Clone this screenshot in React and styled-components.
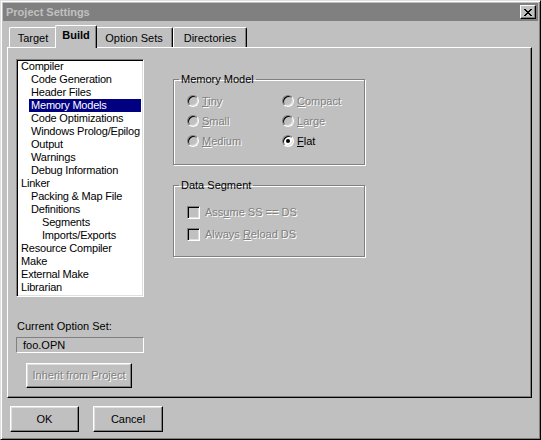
import React from "react";
import styled, { createGlobalStyle, css } from "styled-components";

const GlobalStyle = createGlobalStyle`
  html, body {
    margin: 0;
    padding: 0;
    background: #c0c0c0;
  }
  body {
    font-family: "Liberation Sans", Arial, sans-serif;
    font-size: 11px;
    line-height: 13px;
    color: #000;
  }
`;

const TREE = [
  ["Compiler", 0],
  ["Code Generation", 1],
  ["Header Files", 1],
  ["Memory Models", 1, true],
  ["Code Optimizations", 1],
  ["Windows Prolog/Epilog", 1],
  ["Output", 1],
  ["Warnings", 1],
  ["Debug Information", 1],
  ["Linker", 0],
  ["Packing & Map File", 1],
  ["Definitions", 1],
  ["Segments", 2],
  ["Imports/Exports", 2],
  ["Resource Compiler", 0],
  ["Make", 0],
  ["External Make", 0],
  ["Librarian", 0],
];

const INDENT = [0, 10, 21];

const etched = css`
  color: #808080;
  text-shadow: 1px 1px 0 #fff;
`;

const App = () => {
  return (
    <>
      <GlobalStyle />
      <Window>
        <TitleBar>
          <Title>Project Settings</Title>
          <CloseButton>
            <svg width="8" height="7" viewBox="0 0 8 7">
              <path
                d="M0 0h2v1h1v1h2v-1h1v-1h2v1h-1v1h-1v1h-1v1h1v1h1v1h1v1h-2v-1h-1v-1h-2v1h-1v1h-2v-1h1v-1h1v-1h1v-1h-1v-1h-1v-1h-1z"
                fill="#000"
              />
            </svg>
          </CloseButton>
        </TitleBar>

        <Body>
          <TabStrip>
            <Tab>Target</Tab>
            <Tab $active>Build</Tab>
            <Tab $w={78}>Option Sets</Tab>
            <Tab $w={74}>Directories</Tab>
          </TabStrip>

          <Panel>
            <LeftColumn>
              <TreeList>
                {TREE.map(([label, level, selected]) => (
                  <TreeItem key={label} $level={INDENT[level]} $selected={selected}>
                    {label}
                  </TreeItem>
                ))}
              </TreeList>

              <OptionSetLabel>Current Option Set:</OptionSetLabel>
              <ReadOnlyField>foo.OPN</ReadOnlyField>
              <PushButton $disabled $w={106} $h={25} $ml={10}>
                Inherit from Project
              </PushButton>
            </LeftColumn>

            <RightColumn>
              <Group $h={92}>
                <Legend>Memory Model</Legend>
                <RadioGrid>
                  <Radio label={<><u>T</u>iny</>} />
                  <Radio label={<><u>S</u>mall</>} />
                  <Radio label={<><u>M</u>edium</>} />
                  <Radio label={<><u>C</u>ompact</>} />
                  <Radio label={<><u>L</u>arge</>} />
                  <Radio label={<><u>F</u>lat</>} checked enabled />
                </RadioGrid>
              </Group>

              <Group $h={78} $mt={14}>
                <Legend>Data Segment</Legend>
                <CheckList>
                  <CheckRow>
                    <CheckBox />
                    <Etched>Ass<u>u</u>me SS == DS</Etched>
                  </CheckRow>
                  <CheckRow>
                    <CheckBox />
                    <Etched>Always <u>R</u>eload DS</Etched>
                  </CheckRow>
                </CheckList>
              </Group>
            </RightColumn>
          </Panel>

          <ButtonRow>
            <PushButton $w={69} $h={26}>OK</PushButton>
            <PushButton $w={70} $h={26}>Cancel</PushButton>
          </ButtonRow>
        </Body>
      </Window>
    </>
  );
};

const Radio = ({ label, checked, enabled }) => (
  <RadioRow>
    <RadioCircle $checked={checked} $enabled={enabled} />
    {enabled ? <span>{label}</span> : <Etched>{label}</Etched>}
  </RadioRow>
);

const Window = styled.div`
  box-sizing: border-box;
  width: 541px;
  height: 440px;
  padding: 1px;
  border: 1px solid;
  border-color: #dfdfdf #000 #000 #dfdfdf;
  box-shadow: inset 1px 1px 0 #fff, inset -1px -1px 0 #808080;
  display: flex;
  flex-direction: column;
  background: #c0c0c0;
`;

const TitleBar = styled.div`
  height: 18px;
  margin: 1px 1px 0 1px;
  padding: 0 2px 0 3px;
  background: #808080;
  display: flex;
  align-items: center;
  justify-content: space-between;
`;

const Title = styled.span`
  font-weight: bold;
  font-size: 11px;
  color: #c0c0c0;
`;

const CloseButton = styled.div`
  box-sizing: border-box;
  width: 16px;
  height: 14px;
  background: #c0c0c0;
  border: 1px solid;
  border-color: #fff #000 #000 #fff;
  box-shadow: inset -1px -1px 0 #808080;
  display: flex;
  align-items: center;
  justify-content: center;
  padding-right: 1px;
`;

const Body = styled.div`
  flex: 1;
  display: flex;
  flex-direction: column;
  padding: 4px 7px 0 5px;
`;

const TabStrip = styled.div`
  display: flex;
  align-items: flex-end;
  height: 22px;
  padding-left: 2px;
  position: relative;
  z-index: 1;
`;

const Tab = styled.div`
  box-sizing: border-box;
  width: ${({ $w }) => ($w ? `${$w}px` : "48px")};
  height: 20px;
  background: #c0c0c0;
  border-top: 1px solid #fff;
  border-left: 1px solid #fff;
  border-right: 1px solid #000;
  border-radius: 2px 2px 0 0;
  box-shadow: inset -1px 0 0 #808080;
  display: flex;
  align-items: center;
  justify-content: center;
  padding-top: 2px;

  ${({ $active }) =>
    $active &&
    css`
      width: 42px;
      height: 23px;
      margin: 0 -2px -1px;
      font-weight: bold;
      padding-top: 0;
      padding-bottom: 3px;
      position: relative;
      z-index: 2;
    `}
`;

const Panel = styled.div`
  box-sizing: border-box;
  height: 351px;
  border: 1px solid;
  border-color: #fff #000 #000 #fff;
  box-shadow: inset -1px -1px 0 #808080;
  padding: 11px 8px 9px 8px;
  display: grid;
  grid-template-columns: 128px 192px;
  column-gap: 29px;
`;

const LeftColumn = styled.div`
  display: flex;
  flex-direction: column;
  align-items: flex-start;
`;

const TreeList = styled.div`
  box-sizing: border-box;
  width: 128px;
  height: 238px;
  background: #fff;
  border: 1px solid;
  border-color: #808080 #fff #fff #808080;
  box-shadow: inset 1px 1px 0 #000, inset -1px -1px 0 #dfdfdf;
  padding: 0 2px 0 2px;
  overflow: hidden;
`;

const TreeItem = styled.div`
  height: 13px;
  line-height: 13px;
  margin-left: ${({ $level }) => $level}px;
  padding-left: 2px;
  white-space: nowrap;
  letter-spacing: -0.2px;
  ${({ $selected }) =>
    $selected &&
    css`
      background: #000080;
      color: #fff;
    `}
`;

const OptionSetLabel = styled.div`
  margin: auto 0 4px 1px;
`;

const ReadOnlyField = styled.div`
  box-sizing: border-box;
  width: 128px;
  height: 16px;
  border: 1px solid;
  border-color: #808080 #fff #fff #808080;
  padding: 1px 0 0 6px;
  margin-bottom: 10px;
`;

const PushButton = styled.div`
  box-sizing: border-box;
  width: ${({ $w }) => $w}px;
  height: ${({ $h }) => $h}px;
  margin-left: ${({ $ml }) => $ml || 0}px;
  background: #c0c0c0;
  border: 1px solid;
  border-color: #fff #000 #000 #fff;
  box-shadow: inset -1px -1px 0 #808080, inset 1px 1px 0 #dfdfdf;
  display: flex;
  align-items: center;
  justify-content: center;
  ${({ $disabled }) => $disabled && etched}
`;

const RightColumn = styled.div`
  display: flex;
  flex-direction: column;
  padding-top: 14px;
`;

const Group = styled.fieldset`
  box-sizing: border-box;
  height: ${({ $h }) => $h}px;
  margin: ${({ $mt }) => $mt || 0}px 0 0 0;
  padding: 0 0 0 13px;
  border: 1px solid #808080;
  box-shadow: inset 1px 1px 0 #fff, 1px 1px 0 #fff;
  min-width: 0;
`;

const Legend = styled.legend`
  padding: 0 2px;
  margin-left: -8px;
  line-height: 13px;
`;

const RadioGrid = styled.div`
  display: grid;
  grid-template-columns: 95px auto;
  grid-template-rows: repeat(3, 20px);
  grid-auto-flow: column;
  margin-top: 5px;
`;

const RadioRow = styled.div`
  display: flex;
  align-items: center;
  gap: 3px;
`;

const RadioCircle = styled.span`
  box-sizing: border-box;
  width: 12px;
  height: 12px;
  border-radius: 50%;
  border: 1px solid;
  border-color: #808080 #fff #fff #808080;
  box-shadow: inset 1px 1px 0 #000, inset -1px -1px 0 #dfdfdf;
  background: ${({ $enabled }) => ($enabled ? "#fff" : "#c0c0c0")};
  display: flex;
  align-items: center;
  justify-content: center;

  &::after {
    content: "";
    width: 4px;
    height: 4px;
    border-radius: 50%;
    background: #000;
    display: ${({ $checked }) => ($checked ? "block" : "none")};
  }
`;

const Etched = styled.span`
  ${etched}
`;

const CheckList = styled.div`
  display: flex;
  flex-direction: column;
  gap: 2px;
  margin-top: 10px;
`;

const CheckRow = styled.div`
  height: 20px;
  display: flex;
  align-items: center;
  gap: 5px;
`;

const CheckBox = styled.span`
  box-sizing: border-box;
  width: 13px;
  height: 13px;
  border: 1px solid;
  border-color: #808080 #fff #fff #808080;
  box-shadow: inset 1px 1px 0 #000, inset -1px -1px 0 #dfdfdf;
  background: #c0c0c0;
`;

const ButtonRow = styled.div`
  display: flex;
  gap: 14px;
  margin-top: 8px;
  padding-left: 3px;
`;

export default App;
